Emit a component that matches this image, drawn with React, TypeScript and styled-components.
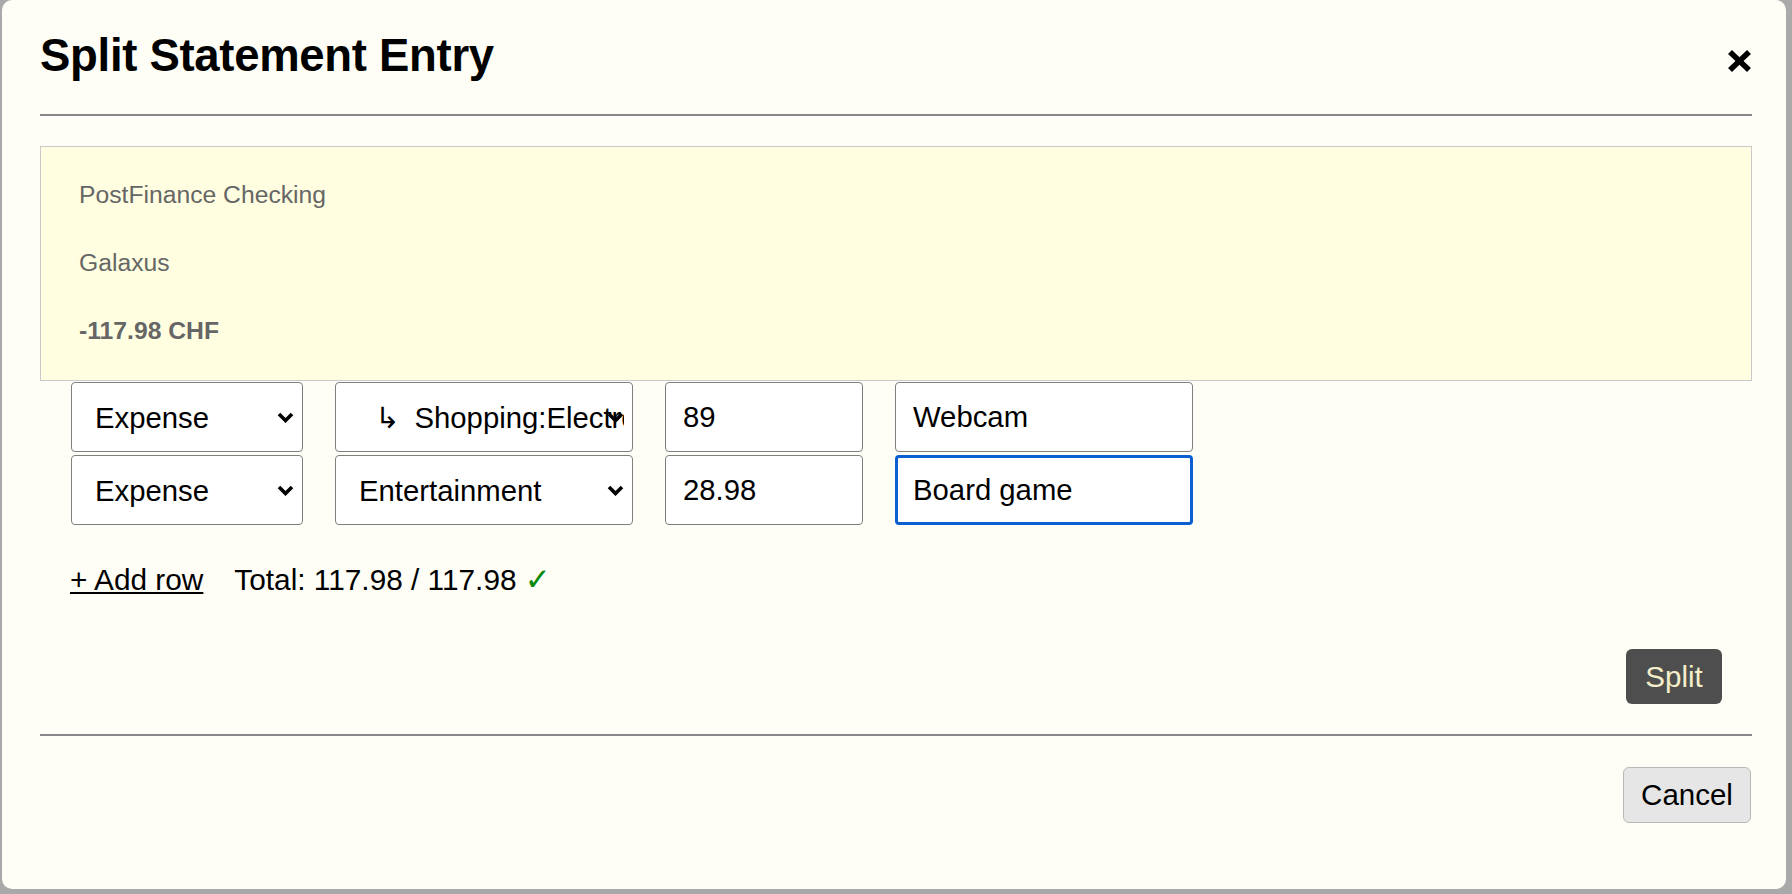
import React from "react";
import styled, { createGlobalStyle } from "styled-components";

const GlobalStyle = createGlobalStyle`
  html, body { margin: 0; padding: 0; }
  body {
    background: #a9a9a9;
    font-family: "Liberation Sans", Arial, Helvetica, sans-serif;
  }
`;

const chevron =
  "url(\"data:image/svg+xml,%3Csvg xmlns='http://www.w3.org/2000/svg' width='17' height='11' viewBox='0 0 17 11'%3E%3Cpolyline points='2,2 8.5,8.5 15,2' fill='none' stroke='%23000' stroke-width='3.6'/%3E%3C/svg%3E\")";

const Page = styled.div`
  width: 1792px;
  height: 894px;
  box-sizing: border-box;
  padding: 0 6px 5px 2px;
  overflow: hidden;
`;

const Dialog = styled.div`
  box-sizing: border-box;
  width: 100%;
  height: 100%;
  background: #fefef6;
  border-radius: 10px;
  padding: 0 34px 0 38px;
  display: flex;
  flex-direction: column;
  color: #000;
`;

const Header = styled.header`
  box-sizing: border-box;
  height: 114px;
  padding-top: 33px;
  display: flex;
  justify-content: space-between;
  align-items: flex-start;
  flex: none;
`;

const Title = styled.h2`
  margin: 0;
  font-size: 45.5px;
  line-height: 45px;
  letter-spacing: -0.3px;
  font-weight: 700;
`;

const CloseButton = styled.button`
  margin-top: 16px;
  padding: 0;
  border: 0;
  background: none;
  width: 25px;
  height: 24px;
  display: flex;
  cursor: pointer;
`;

const Rule = styled.hr<{ $gap?: number }>`
  margin: ${(p) => p.$gap ?? 0}px 0 0;
  border: 0;
  height: 2px;
  background: #878787;
  flex: none;
`;

const InfoBox = styled.section`
  margin-top: 30px;
  box-sizing: border-box;
  height: 235px;
  border: 1px solid #c9c9c9;
  background: #fffee0;
  padding: 34px 38px 35px;
  display: flex;
  flex-direction: column;
  gap: 40px;
  flex: none;
`;

const InfoLine = styled.div<{ $bold?: boolean }>`
  font-size: 24.7px;
  line-height: 28px;
  color: #666;
  font-weight: ${(p) => (p.$bold ? 700 : 400)};
`;

const Rows = styled.div`
  margin-top: 1px;
  padding-left: 31px;
  display: flex;
  flex-direction: column;
  gap: 3px;
`;

const Row = styled.div`
  display: flex;
  gap: 32px;
`;

const Select = styled.select<{ $w: number }>`
  appearance: none;
  -webkit-appearance: none;
  box-sizing: border-box;
  width: ${(p) => p.$w}px;
  height: 70px;
  margin: 0;
  border: 1px solid #7f7f7f;
  border-radius: 4px;
  background: #fff ${chevron} no-repeat right 8px center / 17px 11px;
  padding: 0 8px 0 23px;
  font-family: "Liberation Sans", "DejaVu Sans", Arial, sans-serif;
  font-size: 29.3px;
  color: #000;
`;

const Input = styled.input<{ $w: number; $focused?: boolean }>`
  box-sizing: border-box;
  width: ${(p) => p.$w}px;
  height: 70px;
  margin: 0;
  border: ${(p) => (p.$focused ? "3px solid #0a5fd2" : "1px solid #7f7f7f")};
  border-radius: 4px;
  background: #fff;
  padding: 0 ${(p) => (p.$focused ? 15 : 17)}px;
  font-family: "Liberation Sans", Arial, sans-serif;
  font-size: 29.3px;
  color: #000;
  outline: none;
`;

const Summary = styled.div`
  margin-top: 37px;
  padding-left: 30px;
  display: flex;
  align-items: baseline;
  gap: 31px;
  font-size: 29.8px;
  line-height: 34px;
`;

const AddLink = styled.a`
  color: #000;
  text-decoration: underline;
  text-decoration-thickness: 2px;
  text-underline-offset: 2px;
  cursor: pointer;
`;

const Total = styled.span`
  color: #000;
`;

const Check = styled.span`
  color: #0a8a0a;
  font-family: "DejaVu Sans", sans-serif;
  font-size: 31px;
  line-height: 34px;
`;

const SplitRow = styled.div`
  margin-top: 52px;
  padding-right: 30px;
  display: flex;
  justify-content: flex-end;
  flex: none;
`;

const SplitButton = styled.button`
  width: 96px;
  height: 55px;
  padding: 0;
  border: 0;
  border-radius: 6px;
  background: #4e4e4e;
  color: #f4eecb;
  font-family: "Liberation Sans", Arial, sans-serif;
  font-size: 29.5px;
  cursor: pointer;
`;

const Footer = styled.footer`
  margin-top: 31px;
  padding-right: 1px;
  display: flex;
  justify-content: flex-end;
  flex: none;
`;

const CancelButton = styled.button`
  box-sizing: border-box;
  width: 128px;
  height: 56px;
  padding: 0;
  border: 1.5px solid #b8b8b8;
  border-radius: 6px;
  background: #e6e6e6;
  color: #000;
  font-family: "Liberation Sans", Arial, sans-serif;
  font-size: 29.5px;
  cursor: pointer;
`;

const CloseIcon = () => (
  <svg width="25" height="24" viewBox="0 0 25 24">
    <line x1="3" y1="3" x2="22" y2="21" stroke="#000" strokeWidth="5.6" />
    <line x1="22" y1="3" x2="3" y2="21" stroke="#000" strokeWidth="5.6" />
  </svg>
);

const rows = [
  { type: "Expense", account: "\u00a0\u00a0\u21b3\u2002Shopping:Electronics", amount: "89", memo: "Webcam", focused: false },
  { type: "Expense", account: "Entertainment", amount: "28.98", memo: "Board game", focused: true },
];

export default function App() {
  return (
    <>
      <GlobalStyle />
      <Page>
        <Dialog>
          <Header>
            <Title>Split Statement Entry</Title>
            <CloseButton aria-label="Close">
              <CloseIcon />
            </CloseButton>
          </Header>
          <Rule />
          <InfoBox>
            <InfoLine>PostFinance Checking</InfoLine>
            <InfoLine>Galaxus</InfoLine>
            <InfoLine $bold>-117.98 CHF</InfoLine>
          </InfoBox>
          <Rows>
            {rows.map((r, i) => (
              <Row key={i}>
                <Select $w={232} defaultValue={r.type}>
                  <option>{r.type}</option>
                  <option>Income</option>
                </Select>
                <Select $w={298} defaultValue={r.account}>
                  <option>{r.account}</option>
                </Select>
                <Input $w={198} defaultValue={r.amount} />
                <Input $w={298} defaultValue={r.memo} $focused={r.focused} />
              </Row>
            ))}
          </Rows>
          <Summary>
            <AddLink>+ Add row</AddLink>
            <Total>
              Total: 117.98 / 117.98 <Check>✓</Check>
            </Total>
          </Summary>
          <SplitRow>
            <SplitButton>Split</SplitButton>
          </SplitRow>
          <Rule $gap={30} />
          <Footer>
            <CancelButton>Cancel</CancelButton>
          </Footer>
        </Dialog>
      </Page>
    </>
  );
}
